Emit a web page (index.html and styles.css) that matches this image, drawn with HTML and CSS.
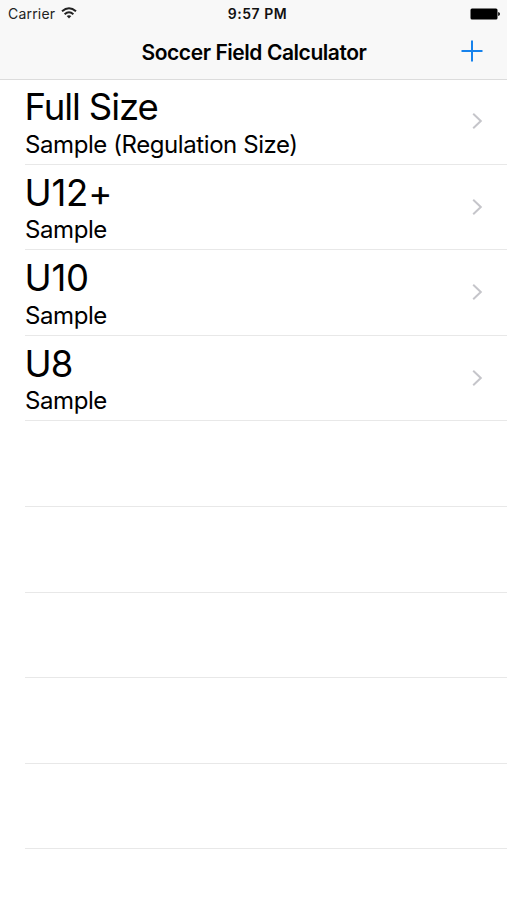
FILE: index.html
```html
<!DOCTYPE html>
<html lang="en">
<head>
<meta charset="utf-8">
<title>Soccer Field Calculator</title>
<link rel="stylesheet" href="styles.css">
</head>
<body>
<header class="header">
  <div class="status">
    <div class="carrier"><span class="carrier-name">Carrier</span>
      <svg class="wifi" width="16" height="12" viewBox="0 0 16 12"><g fill="none" stroke="#222" stroke-width="2"><path d="M1 4.2Q8-1.8 15 4.2"/><path d="M3.6 7.2Q8 3.4 12.4 7.2"/></g><path d="M5.7 9.1Q8 7.2 10.3 9.1L8 11.6Z" fill="#222"/></svg>
    </div>
    <div class="time">9:57 PM</div>
    <svg class="battery" width="31" height="12" viewBox="0 0 31 12"><rect x="0.5" y="0.5" width="27" height="11" rx="1.5"/><path d="M28.2 4Q30 4.4 30 6T28.2 8Z"/></svg>
  </div>
  <div class="nav">
    <h1 class="title">Soccer Field Calculator</h1>
    <svg class="add" width="22" height="22" viewBox="0 0 22 22"><path d="M11 .5V21.5M.5 11H21.5" stroke="#1682ec" stroke-width="2"/></svg>
  </div>
</header>
<main class="list">
  <div class="row"><div><div class="name name-words">Full Size</div><div class="detail">Sample (Regulation Size)</div></div><svg class="chevron" width="11" height="18" viewBox="0 0 11 18"><path d="M1.2 1.8L8.8 9L1.2 16.2"/></svg></div>
  <div class="row"><div><div class="name">U12+</div><div class="detail">Sample</div></div><svg class="chevron" width="11" height="18" viewBox="0 0 11 18"><path d="M1.2 1.8L8.8 9L1.2 16.2"/></svg></div>
  <div class="row"><div><div class="name">U10</div><div class="detail">Sample</div></div><svg class="chevron" width="11" height="18" viewBox="0 0 11 18"><path d="M1.2 1.8L8.8 9L1.2 16.2"/></svg></div>
  <div class="row"><div><div class="name name-short">U8</div><div class="detail">Sample</div></div><svg class="chevron" width="11" height="18" viewBox="0 0 11 18"><path d="M1.2 1.8L8.8 9L1.2 16.2"/></svg></div>
  <div class="row"></div><div class="row"></div><div class="row"></div><div class="row"></div><div class="row"></div>
</main>
</body>
</html>
```
FILE: styles.css
```css
* { box-sizing: border-box; }
body { margin: 0; height: 900px; overflow: hidden; background: #fff; color: #000; font-family: Inter, "Liberation Sans", sans-serif; }
.header { height: 80px; background: #f8f8f8; border-bottom: 1px solid #dcdcdc; }
.status { display: grid; grid-template-columns: 1fr auto 1fr; align-items: center; height: 27px; padding: 0 6px 0 8px; }
.carrier { display: flex; align-items: center; gap: 6px; font-size: 14px; letter-spacing: .2px; color: #222; }
.wifi { margin-top: -2px; }
.time { padding-left: 6px; font-size: 14px; font-weight: 600; letter-spacing: .5px; color: #111; }
.battery { justify-self: end; }
.nav { display: grid; grid-template-columns: 1fr auto 1fr; align-items: center; height: 50px; padding: 0 24px; }
.title { grid-column: 2; margin: 1px 0 0 1px; font-size: 21px; line-height: 28px; font-weight: 600; letter-spacing: -.44px; white-space: nowrap; }
.add { justify-self: end; margin-top: -2px; }
.list { padding-left: 25px; margin-top: -1px; }
.row { display: flex; justify-content: space-between; height: 85.6px; padding: 6px 24px 0 0; border-bottom: 1px solid #e8e8e8; }
.name { margin-left: -.5px; font-size: 36.5px; line-height: 44px; font-weight: 400; letter-spacing: -.2px; }
.name-words { letter-spacing: -1.1px; }
.name-short { letter-spacing: -1px; }
.detail { margin-top: .5px; font-size: 24px; line-height: 29px; letter-spacing: -.42px; }
.chevron { margin-top: 27px; fill: none; stroke: #c5c5ca; stroke-width: 2; }
```
